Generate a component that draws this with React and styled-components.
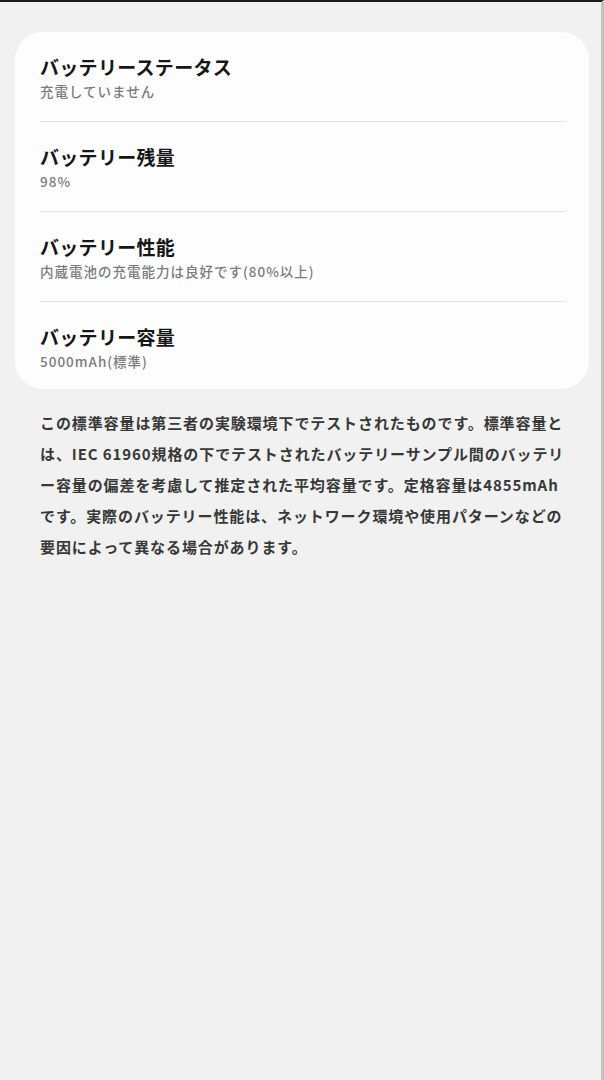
import styled, { createGlobalStyle } from "styled-components";

const GlobalStyle = createGlobalStyle`
  html, body {
    margin: 0;
    padding: 0;
    background: #f0f1f0;
  }
  body {
    font-family: "Noto Sans CJK JP", "Noto Sans", Roboto, sans-serif;
  }
`;

const Screen = styled.div`
  box-sizing: border-box;
  min-height: 100vh;
  border-top: 2px solid #1c1c1c;
  border-right: 3px solid #c2c2c2;
  padding: 30px 12px 0 15px;
`;

const Card = styled.div`
  background: #fdfdfd;
  border-radius: 28px;
  padding: 0 23px 0 25px;
`;

const Row = styled.div`
  padding: 23px 0 21px;
  border-top: 1px solid #e4e4e4;

  &:first-child {
    border-top: none;
  }
  &:last-child {
    padding-bottom: 19px;
  }
`;

const Title = styled.div`
  font-size: 19px;
  line-height: 24px;
  font-weight: 700;
  color: #161616;
  letter-spacing: 0.3px;
`;

const Sub = styled.div`
  margin-top: 3px;
  font-size: 13.5px;
  line-height: 18px;
  font-weight: 500;
  color: #7b7b7b;
  letter-spacing: 1px;
`;

const Note = styled.p`
  margin: 18px 0 0;
  padding: 0 23px 0 25px;
  font-size: 15px;
  line-height: 31px;
  font-weight: 700;
  color: #383838;
  letter-spacing: 0.9px;
`;

const items = [
  { title: "バッテリーステータス", sub: "充電していません" },
  { title: "バッテリー残量", sub: "98%" },
  { title: "バッテリー性能", sub: "内蔵電池の充電能力は良好です(80%以上)" },
  { title: "バッテリー容量", sub: "5000mAh(標準)" },
];

export default function App() {
  return (
    <>
      <GlobalStyle />
      <Screen>
        <Card>
          {items.map((it) => (
            <Row key={it.title}>
              <Title>{it.title}</Title>
              <Sub>{it.sub}</Sub>
            </Row>
          ))}
        </Card>
        <Note>
          この標準容量は第三者の実験環境下でテストされたものです。標準容量とは、IEC
          61960規格の下でテストされたバッテリーサンプル間のバッテリー容量の偏差を考慮して推定された平均容量です。定格容量は4855mAhです。実際のバッテリー性能は、ネットワーク環境や使用パターンなどの要因によって異なる場合があります。
        </Note>
      </Screen>
    </>
  );
}
